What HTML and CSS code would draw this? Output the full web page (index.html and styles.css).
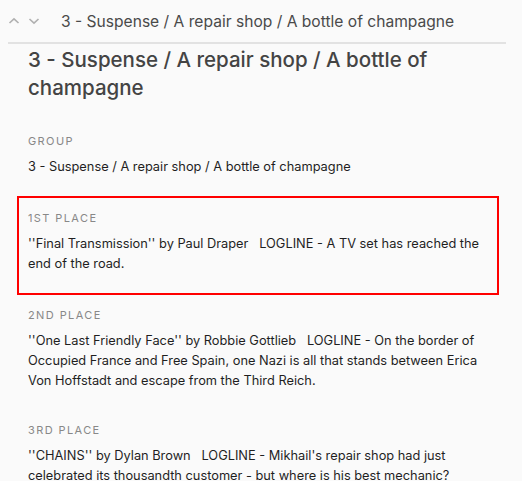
FILE: index.html
```html
<!DOCTYPE html>
<html lang="en">
<head>
    <meta charset="UTF-8">
    <meta name="viewport" content="width=device-width, initial-scale=1.0">
    <title>3 - Suspense / A repair shop / A bottle of champagne</title>
    <link rel="stylesheet" href="styles.css">
</head>
<body>
    <div class="page">
        <header class="topbar">
            <div class="nav">
                <button class="nav-btn" title="Previous">
                    <svg width="12" height="8" viewBox="0 0 12 8"><path d="M1.5 6 L6 1.8 L10.5 6" fill="none" stroke="currentColor" stroke-width="1.6"/></svg>
                </button>
                <button class="nav-btn" title="Next">
                    <svg width="12" height="8" viewBox="0 0 12 8"><path d="M1.5 2 L6 6.2 L10.5 2" fill="none" stroke="currentColor" stroke-width="1.6"/></svg>
                </button>
            </div>
            <div class="topbar-title">3 - Suspense / A repair shop / A bottle of champagne</div>
        </header>
        <main class="record">
            <h1 class="record-title">3 - Suspense / A repair shop / A bottle of champagne</h1>
            <div class="field">
                <div class="field-label">Group</div>
                <div class="field-value">3 - Suspense / A repair shop / A bottle of champagne</div>
            </div>
            <div class="field selected">
                <div class="field-label">1st Place</div>
                <div class="field-value">''Final Transmission'' by Paul Draper   LOGLINE - A TV set has reached the end of the road.</div>
            </div>
            <div class="field">
                <div class="field-label">2nd Place</div>
                <div class="field-value">''One Last Friendly Face'' by Robbie Gottlieb   LOGLINE - On the border of Occupied France and Free Spain, one Nazi is all that stands between Erica Von Hoffstadt and escape from the Third Reich.</div>
            </div>
            <div class="field">
                <div class="field-label">3rd Place</div>
                <div class="field-value">''CHAINS'' by Dylan Brown   LOGLINE - Mikhail's repair shop had just celebrated its thousandth customer - but where is his best mechanic?</div>
            </div>
        </main>
        <svg class="corner-dot" width="24" height="12" viewBox="0 0 24 12"><circle cx="23" cy="-3" r="11" fill="#4d4d4d"/></svg>
    </div>
</body>
</html>
```

FILE: styles.css
```css
* {
    box-sizing: border-box;
}
body {
    margin: 0;
    background: #fafafa;
    font-family: Inter, "Noto Sans", sans-serif;
    color: #1f1f1f;
}
.page {
    position: relative;
    width: 522px;
    height: 481px;
    overflow: hidden;
}
/* edge of the account button peeking in at the top right */
.corner-dot {
    position: absolute;
    top: 0;
    right: -12px;
    z-index: 2;
}
.topbar {
    display: flex;
    align-items: center;
    height: 44px;
    margin: 0 16px 0 8px;
    border-bottom: 2px solid #e2e2e2;
}
.nav {
    display: flex;
    gap: 8px;
    width: 53px;
}
.nav-btn {
    display: flex;
    padding: 0;
    border: none;
    background: none;
    color: #b0b0b0;
    cursor: pointer;
}
.topbar-title {
    font-size: 15.6px;
    color: #4a4a4a;
}
.record {
    padding: 0 23px 0 17px;
}
.record-title {
    margin: 2px 0 19px 11px;
    font-size: 20.5px;
    font-weight: 500;
    line-height: 28px;
    color: #444;
}
.field {
    padding: 12px 11px 19px;
}
.field.selected {
    border: 2px solid #f00;
    padding: 12px 9px 19px;
}
.field-label {
    font-size: 11px;
    line-height: 16px;
    letter-spacing: 1.4px;
    text-transform: uppercase;
    color: #888;
}
.field-value {
    margin-top: 8px;
    font-size: 12.8px;
    line-height: 20px;
    white-space: pre-wrap;
}
```
